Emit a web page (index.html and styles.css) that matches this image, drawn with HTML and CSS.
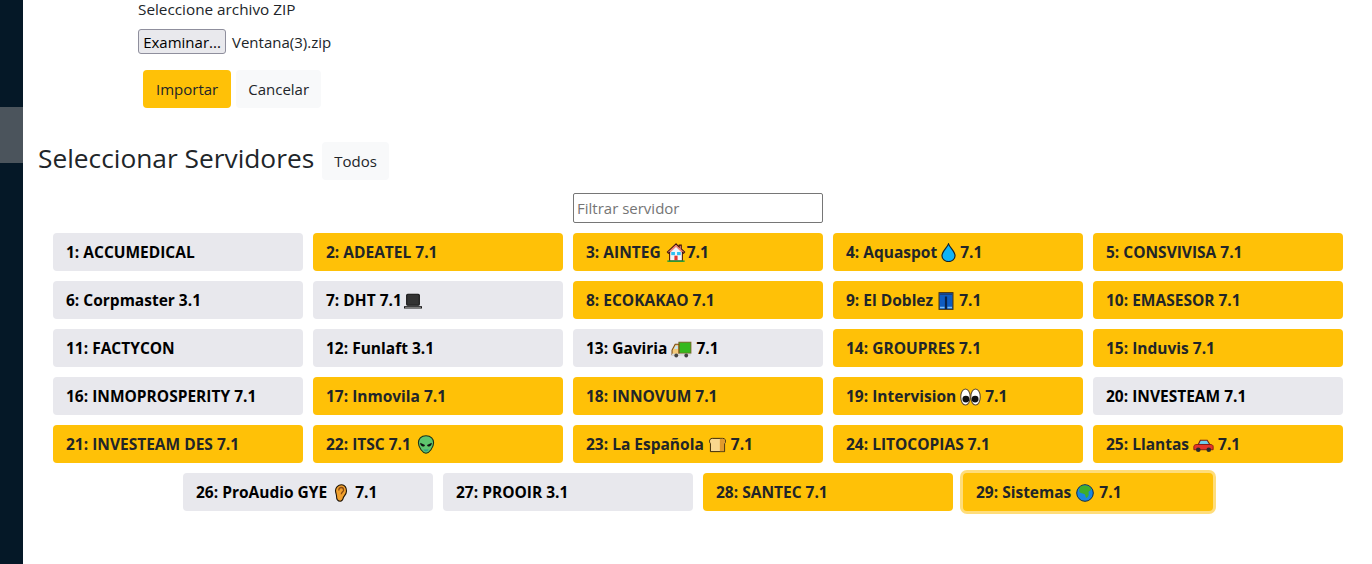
FILE: index.html
```html
<!DOCTYPE html>
<html lang="es">
<head>
    <meta charset="UTF-8">
    <meta name="viewport" content="width=device-width, initial-scale=1.0">
    <title>Seleccionar Servidores</title>
    <link rel="stylesheet" href="styles.css">
</head>
<body>
    <svg class="defs" width="0" height="0" aria-hidden="true">
        <defs>
            <symbol id="house" viewBox="0 0 18 18">
                <path d="M9 .8 .8 8.500l1 1.200L3 8.800V17h12V8.800l1.200.9 1-1.200L14 5.500V2h-2v1.800z" fill="#f2877a" stroke="#3f120b" stroke-width="1"/>
                <path d="M3.600 9 9 3.800 14.400 9v7.400H3.600z" fill="#f2f6f8"/>
                <rect x="4.500" y="8.500" width="3.500" height="3" fill="#2fc0f2"/>
                <rect x="10" y="8.500" width="3.500" height="3" fill="#2fc0f2"/>
                <rect x="7.500" y="12" width="3" height="4.500" fill="#e5352b"/>
                <path d="M.8 17.200h16.400" stroke="#1f9e3c" stroke-width="1.400"/>
            </symbol>
            <symbol id="drop" viewBox="2 0 14 18">
                <path d="M9 .8C7.600 4.500 2.800 8.300 2.800 12a6.200 5.600 0 0 0 12.400 0C15.200 8.300 10.400 4.500 9 .8z" fill="#0fb4f6" stroke="#10222e" stroke-width="1.100"/>
            </symbol>
            <symbol id="jeans" viewBox="0 0 16 18">
                <rect x="1" y=".6" width="14" height="16.800" fill="#0f5cc0" stroke="#4a3510" stroke-width="1"/>
                <path d="M1.500 2.200h13" stroke="#1c3f7a" stroke-width="1.600"/>
                <path d="M8 4.500V17" stroke="#0a2348" stroke-width="2.200"/>
                <path d="M2 15.500h4.500M9.500 15.500H14" stroke="#7ec0f5" stroke-width="1.600"/>
            </symbol>
            <symbol id="laptop" viewBox="0 0 18 18">
                <rect x="3" y="3" width="12" height="10.500" rx="1" fill="#333" stroke="#111" stroke-width="1"/>
                <path d="M.5 15.500h17" stroke="#111" stroke-width="2.200"/>
                <path d="M1.500 15.800h15" stroke="#a8a8a8" stroke-width=".8"/>
            </symbol>
            <symbol id="truck" viewBox="0 0 20 18">
                <rect x="7.500" y="2.500" width="11.500" height="10.500" fill="#35b81f" stroke="#7a5a20" stroke-width=".8"/>
                <path d="M7.500 4.500H4L1 10v4.500h6.500z" fill="#f2c879" stroke="#7a4a10" stroke-width="1"/>
                <path d="M4.400 6H6.500v3H2.900z" fill="#c8e4f2"/>
                <path d="M1 13.500h18v1.800H1z" fill="#d8dcde"/>
                <circle cx="5" cy="15.200" r="1.800" fill="#444"/>
                <circle cx="14.500" cy="15.200" r="1.800" fill="#444"/>
            </symbol>
            <symbol id="eyes" viewBox="0 0 20 18">
                <ellipse cx="5.200" cy="9" rx="4.500" ry="7.600" fill="#fff" stroke="#5a4630" stroke-width="1"/>
                <ellipse cx="14.800" cy="9" rx="4.500" ry="7.600" fill="#fff" stroke="#5a4630" stroke-width="1"/>
                <circle cx="5.600" cy="11" r="3.300" fill="#111"/>
                <circle cx="14.400" cy="11" r="3.300" fill="#111"/>
            </symbol>
            <symbol id="alien" viewBox="0 0 18 18">
                <path d="M9 .8C4.200.8 1.800 4 1.800 7.400 1.800 11.800 6 17.300 9 17.300s7.200-5.500 7.200-9.900C16.200 4 13.800.8 9 .8z" fill="#5fc56e" stroke="#17321c" stroke-width="1"/>
                <path d="M3.500 7.400 8 9.400c-.2 1.500-1.600 1.700-2.600 1.300C4.300 10.200 3.500 9 3.500 7.400zM14.500 7.400 10 9.400c.2 1.500 1.600 1.700 2.600 1.300 1.100-.5 1.900-1.700 1.900-3.300z" fill="#111"/>
                <path d="M6.500 13.200c1.500.8 3.500.8 5 0l-1 2c-1 .6-2 .6-3 0z" fill="#2aa08a"/>
            </symbol>
            <symbol id="bread" viewBox="0 0 18 18">
                <path d="M3.500 2h11c2.200 0 3 1.500 3 3 0 1-.5 2-1 2.500v8.500H1.500V7.500C1 7 .5 6 .5 5c0-1.500 1-3 3-3z" fill="#f9d78e" stroke="#2f2006" stroke-width="1"/>
                <path d="M11.500 2.500h3c1.800 0 2.500 1.200 2.500 2.500 0 1-.5 2-1 2.300v8.200h-4.500z" fill="#e09a2c"/>
            </symbol>
            <symbol id="car" viewBox="0 0 20 18">
                <path d="M5 8.500 7 4.500h6.500L16 8.500z" fill="#6fd0f0" stroke="#7a1a14" stroke-width="1"/>
                <path d="M.8 10.500c0-1.500 1.500-2 3-2h12.400c1.800 0 3 .6 3 2V13.500H.8z" fill="#e5352b" stroke="#7a1a14" stroke-width=".8"/>
                <circle cx="5" cy="13.500" r="2.200" fill="#2b2b2b"/>
                <circle cx="15" cy="13.500" r="2.200" fill="#2b2b2b"/>
            </symbol>
            <symbol id="ear" viewBox="0 0 14 18">
                <path d="M7.500.8C4 .8 1.500 3.500 1.500 6.500c0 2.500 1 3.500 1 5.500 0 3 1.500 5.200 3.700 5.200s2.700-1.700 3.200-3.700c.4-1.500 3.100-3 3.100-6.500C12.500 3.500 10.800.8 7.500.8z" fill="#f0a02e" stroke="#1f1406" stroke-width="1.100"/>
                <path d="M4.800 6.500c0-2 1-3 2.500-3s2.300 1.200 2.300 2.700c0 1.500-2.300 1.800-2.300 4" fill="none" stroke="#8a4a10" stroke-width="1.300"/>
            </symbol>
            <symbol id="globe" viewBox="0 0 18 18">
                <circle cx="9" cy="9" r="8.300" fill="#1a87e0" stroke="#0c2c4a" stroke-width="1"/>
                <path d="M4.500 2.500c2-1.200 6.500-1.200 8.500 0 1.500 1 2.300 2.500 2 3.500-1 .5-2.500 1-2.500 2.500s1 2-.5 4c-1 1.300-1.800 2-2.300.5-.4-1.500-.2-2.500-1.500-3-1.800-.5-5-1-5-3 0-2 1-3.500 1.300-4.500z" fill="#3fae2a"/>
            </symbol>
        </defs>
    </svg>

    <aside class="sidebar">
        <div class="sidebar-item"></div>
    </aside>

    <main class="content">
        <div class="upload">
            <div class="upload-label">Seleccione archivo ZIP</div>
            <div class="file-row">
                <button class="file-btn">Examinar...</button>
                <span class="file-name">Ventana(3).zip</span>
            </div>
            <div class="actions">
                <button class="btn btn-warning">Importar</button>
                <button class="btn btn-light">Cancelar</button>
            </div>
        </div>

        <div class="heading-row">
            <h3 class="heading">Seleccionar Servidores</h3>
            <button class="btn btn-light">Todos</button>
        </div>

        <div class="filter-row">
            <input class="filter" type="text" placeholder="Filtrar servidor">
        </div>

        <div class="servers">
            <button class="server">1: ACCUMEDICAL</button>
            <button class="server on">2: ADEATEL 7.1</button>
            <button class="server on">3: AINTEG <svg class="emoji e-house"><use href="#house"/></svg>7.1</button>
            <button class="server on">4: Aquaspot <svg class="emoji e-drop"><use href="#drop"/></svg> 7.1</button>
            <button class="server on">5: CONSVIVISA 7.1</button>
            <button class="server">6: Corpmaster 3.1</button>
            <button class="server">7: DHT 7.1<svg class="emoji e-laptop"><use href="#laptop"/></svg></button>
            <button class="server on">8: ECOKAKAO 7.1</button>
            <button class="server on">9: El Doblez <svg class="emoji e-jeans"><use href="#jeans"/></svg> 7.1</button>
            <button class="server on">10: EMASESOR 7.1</button>
            <button class="server">11: FACTYCON</button>
            <button class="server">12: Funlaft 3.1</button>
            <button class="server">13: Gaviria <svg class="emoji e-wide"><use href="#truck"/></svg> 7.1</button>
            <button class="server on">14: GROUPRES 7.1</button>
            <button class="server on">15: Induvis 7.1</button>
            <button class="server">16: INMOPROSPERITY 7.1</button>
            <button class="server on">17: Inmovila 7.1</button>
            <button class="server on">18: INNOVUM 7.1</button>
            <button class="server on">19: Intervision <svg class="emoji e-wide"><use href="#eyes"/></svg> 7.1</button>
            <button class="server">20: INVESTEAM 7.1</button>
            <button class="server on">21: INVESTEAM DES 7.1</button>
            <button class="server on">22: ITSC 7.1 <svg class="emoji e-house"><use href="#alien"/></svg></button>
            <button class="server on">23: La Española <svg class="emoji e-bread"><use href="#bread"/></svg> 7.1</button>
            <button class="server on">24: LITOCOPIAS 7.1</button>
            <button class="server on">25: Llantas <svg class="emoji e-wide"><use href="#car"/></svg> 7.1</button>
            <button class="server">26: ProAudio GYE <svg class="emoji e-ear"><use href="#ear"/></svg> 7.1</button>
            <button class="server">27: PROOIR 3.1</button>
            <button class="server on">28: SANTEC 7.1</button>
            <button class="server on focus">29: Sistemas <svg class="emoji e-globe"><use href="#globe"/></svg> 7.1</button>
        </div>
    </main>
</body>
</html>
```

FILE: styles.css
```css
* {
    box-sizing: border-box;
}

html, body {
    height: 100%;
}

body {
    margin: 0;
    display: flex;
    overflow: hidden;
    background: #fff;
    color: #212529;
    font-family: "Open Sans", "Noto Sans", sans-serif;
    font-size: 15px;
}

.defs {
    position: absolute;
}

.sidebar {
    width: 23px;
    flex: none;
    background: #051827;
    padding-top: 107px;
}

.sidebar-item {
    height: 56px;
    background: #4b545c;
}

.content {
    flex: 1;
    min-width: 0;
}

.upload {
    padding-left: 115px;
}

.upload-label {
    line-height: 18px;
    font-size: 15.3px;
}

.file-row {
    display: flex;
    align-items: center;
    gap: 6px;
    margin-top: 11px;
}

.file-btn {
    width: 88px;
    height: 25px;
    padding: 0;
    background: #e9e9ed;
    border: 1px solid #8f8f9d;
    border-radius: 3px;
    color: #000;
    font-family: inherit;
    font-size: 15px;
}

.actions {
    display: flex;
    gap: 5px;
    margin-top: 16px;
    padding-left: 5px;
}

.btn {
    height: 38px;
    padding: 0 13px;
    border: none;
    border-radius: 4px;
    color: #212529;
    font-family: inherit;
    font-size: 15px;
}

.btn-warning {
    background: #ffc107;
}

.btn-light {
    background: #f8f9fa;
    padding: 0 12px;
}

.heading-row {
    display: flex;
    align-items: center;
    gap: 8px;
    margin-top: 34px;
    padding-left: 15px;
}

.heading {
    margin: 0 0 6px;
    font-size: 26.3px;
    line-height: 32px;
    font-weight: 400;
}

.filter-row {
    display: flex;
    justify-content: center;
    margin-top: 13px;
    padding-left: 1px;
}

.filter {
    width: 250px;
    height: 30px;
    padding: 0 3px;
    border: 1px solid #767676;
    border-radius: 2px;
    font-family: inherit;
    font-size: 15px;
}

.filter::placeholder {
    color: #757575;
}

.servers {
    display: flex;
    flex-wrap: wrap;
    justify-content: center;
    gap: 10px;
    margin-top: 10px;
    padding: 0 29px 0 30px;
}

.server {
    width: 250px;
    height: 38px;
    padding: 0 13px;
    background: #e8e8ed;
    border: none;
    border-radius: 4px;
    color: #000;
    font-family: inherit;
    font-size: 15.5px;
    font-weight: 700;
    text-align: left;
    white-space: nowrap;
}

.server.on {
    background: #ffc107;
    color: #212529;
}

.server.focus {
    box-shadow: 0 0 0 3px #ffdd7a;
}

.emoji {
    width: 18px;
    height: 18px;
    margin: 0 1px;
    vertical-align: -4px;
}

.e-drop {
    width: 15px;
    height: 19px;
    margin: 0;
}

.e-jeans {
    width: 16px;
}

.e-ear {
    width: 14px;
    margin: 0 3px;
}

.e-bread {
    width: 17px;
}

.e-house, .e-laptop {
    width: 20px;
    height: 19px;
}

.e-globe {
    width: 18px;
}

.e-wide {
    width: 21px;
    height: 20px;
    margin: 0;
    vertical-align: -5px;
}
```
